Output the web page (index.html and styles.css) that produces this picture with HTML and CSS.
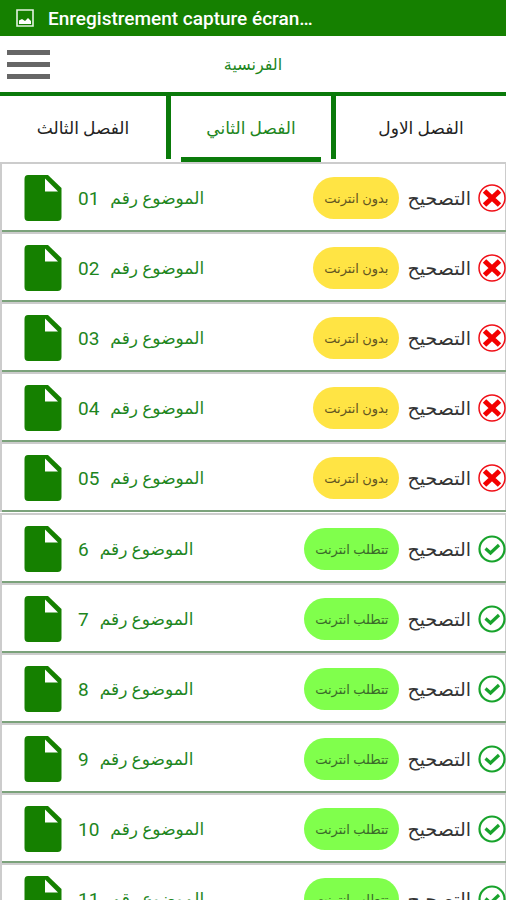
FILE: index.html
```
<!DOCTYPE html>
<html lang="ar">
<head>
<meta charset="utf-8">
<meta name="viewport" content="width=device-width, initial-scale=1">
<title>الفرنسية</title>
<link rel="stylesheet" href="styles.css">
</head>
<body>
<svg class="sprite" aria-hidden="true">
  <symbol id="file" viewBox="0 0 38 48"><path fill="#158000" d="M4 1H24L37.500 14V43Q37.500 47 33.500 47H4Q.5 47 .5 43V5Q.5 1 4 1Z"/><path fill="#fff" d="M21 4.500V17.500H34Z"/></symbol>
  <symbol id="cross" viewBox="0 0 28 28"><circle cx="14" cy="14" r="13" fill="#fff" stroke="#f01018" stroke-width="1.500"/><path d="M6.500 7 21.500 21M21.500 7 6.500 21" stroke="#f40000" stroke-width="5"/></symbol>
  <symbol id="check" viewBox="0 0 28 28"><circle cx="14" cy="14" r="12.500" fill="#fff" stroke="#18a32c" stroke-width="2.200"/><path d="M7.500 13.500 12.500 18 21 10" fill="none" stroke="#18a32c" stroke-width="3.200"/></symbol>
</svg>
<div class="status" dir="ltr" lang="fr">
  <svg class="status-icon" viewBox="0 0 18 18" aria-hidden="true"><path fill="none" stroke="#e4f2e0" stroke-width="1.600" d="M1 1H17V17H1Z"/><path fill="#fff" d="M3 15V11.500L6 10 9 12 12 9 15 12V15Z"/></svg>
  <span>Enregistrement capture écran…</span>
</div>
<header class="bar">
  <button class="menu" type="button" aria-label="القائمة"><span></span><span></span><span></span></button>
  <h1>الفرنسية</h1>
</header>
<nav class="tabs" dir="rtl">
  <a href="#t1">الفصل الاول</a>
  <a href="#t2" class="active" aria-current="page">الفصل الثاني</a>
  <a href="#t3">الفصل الثالث</a>
</nav>
<main>
  <ul class="list">
    <li class="row"><svg class="file" aria-hidden="true"><use href="#file"/></svg><a class="topic" href="#s1"><span class="num">01</span><span>الموضوع رقم</span></a><span class="pill offline">بدون انترنت</span><span class="fix">التصحيح</span><svg class="state" aria-hidden="true"><use href="#cross"/></svg></li>
    <li class="row"><svg class="file" aria-hidden="true"><use href="#file"/></svg><a class="topic" href="#s2"><span class="num">02</span><span>الموضوع رقم</span></a><span class="pill offline">بدون انترنت</span><span class="fix">التصحيح</span><svg class="state" aria-hidden="true"><use href="#cross"/></svg></li>
    <li class="row"><svg class="file" aria-hidden="true"><use href="#file"/></svg><a class="topic" href="#s3"><span class="num">03</span><span>الموضوع رقم</span></a><span class="pill offline">بدون انترنت</span><span class="fix">التصحيح</span><svg class="state" aria-hidden="true"><use href="#cross"/></svg></li>
    <li class="row"><svg class="file" aria-hidden="true"><use href="#file"/></svg><a class="topic" href="#s4"><span class="num">04</span><span>الموضوع رقم</span></a><span class="pill offline">بدون انترنت</span><span class="fix">التصحيح</span><svg class="state" aria-hidden="true"><use href="#cross"/></svg></li>
    <li class="row"><svg class="file" aria-hidden="true"><use href="#file"/></svg><a class="topic" href="#s5"><span class="num">05</span><span>الموضوع رقم</span></a><span class="pill offline">بدون انترنت</span><span class="fix">التصحيح</span><svg class="state" aria-hidden="true"><use href="#cross"/></svg></li>
  </ul>
  <ul class="list">
    <li class="row"><svg class="file" aria-hidden="true"><use href="#file"/></svg><a class="topic" href="#s6"><span class="num">6</span><span>الموضوع رقم</span></a><span class="pill online">تتطلب انترنت</span><span class="fix">التصحيح</span><svg class="state" aria-hidden="true"><use href="#check"/></svg></li>
    <li class="row"><svg class="file" aria-hidden="true"><use href="#file"/></svg><a class="topic" href="#s7"><span class="num">7</span><span>الموضوع رقم</span></a><span class="pill online">تتطلب انترنت</span><span class="fix">التصحيح</span><svg class="state" aria-hidden="true"><use href="#check"/></svg></li>
    <li class="row"><svg class="file" aria-hidden="true"><use href="#file"/></svg><a class="topic" href="#s8"><span class="num">8</span><span>الموضوع رقم</span></a><span class="pill online">تتطلب انترنت</span><span class="fix">التصحيح</span><svg class="state" aria-hidden="true"><use href="#check"/></svg></li>
    <li class="row"><svg class="file" aria-hidden="true"><use href="#file"/></svg><a class="topic" href="#s9"><span class="num">9</span><span>الموضوع رقم</span></a><span class="pill online">تتطلب انترنت</span><span class="fix">التصحيح</span><svg class="state" aria-hidden="true"><use href="#check"/></svg></li>
    <li class="row"><svg class="file" aria-hidden="true"><use href="#file"/></svg><a class="topic" href="#s10"><span class="num">10</span><span>الموضوع رقم</span></a><span class="pill online">تتطلب انترنت</span><span class="fix">التصحيح</span><svg class="state" aria-hidden="true"><use href="#check"/></svg></li>
    <li class="row"><svg class="file" aria-hidden="true"><use href="#file"/></svg><a class="topic" href="#s11"><span class="num">11</span><span>الموضوع رقم</span></a><span class="pill online">تتطلب انترنت</span><span class="fix">التصحيح</span><svg class="state" aria-hidden="true"><use href="#check"/></svg></li>
  </ul>
</main>
</body>
</html>
```
FILE: styles.css
```
* { box-sizing: border-box; }
html { scrollbar-width: none; }
body { margin: 0; background: #fff; font-family: Roboto, "DejaVu Sans", sans-serif; font-size: 17px; color: #333; }
a { color: inherit; text-decoration: none; }
.sprite { display: none; }
.status { display: flex; align-items: center; gap: 14px; height: 36px; padding: 0 16px; background: #158000; color: #fff; font-size: 19px; font-weight: 500; }
.status-icon { width: 18px; height: 18px; }
.bar { display: grid; grid-template-columns: 44px 1fr 44px; align-items: center; height: 60px; padding: 0 7px; border-bottom: 4px solid #0a7a0a; }
.menu { display: flex; flex-direction: column; gap: 7px; width: 43px; padding: 0; border: 0; background: none; }
.menu span { height: 5px; background: #666; }
h1 { margin: 0; text-align: center; font-size: 16px; font-weight: 400; color: #1d861d; }
.tabs { display: grid; grid-template-columns: 170fr 170fr 166fr; height: 66px; }
.tabs a { display: flex; align-items: center; justify-content: center; margin-bottom: 3px; color: #222; }
.tabs .active { position: relative; border: solid #0a7a0a; border-width: 0 5px; color: #1d861d; }
.tabs .active::after { content: ""; position: absolute; left: 10px; right: 10px; bottom: -3px; height: 5px; background: #0a7a0a; }
.list { margin: 0 0 1px; padding: 0; list-style: none; }
.row { display: flex; align-items: center; height: 70px; padding-left: 22px; border: solid #ccc; border-width: 2px 0 0 2px; box-shadow: inset 0 -2px #7ba27b, inset -1px 0 #ccc; }
.file { flex: none; width: 38px; height: 48px; }
.topic { display: flex; align-items: center; gap: 11px; margin-left: 16px; color: #1d861d; }
.num { font-size: 19px; }
.pill { display: flex; align-items: center; height: 42px; margin-left: auto; padding: 0 11px; border-radius: 21px; font-size: 13px; }
.offline { background: #ffe444; color: #625522; }
.online { background: #80ff4c; color: #3b682a; }
.fix { margin: 0 7px 0 8px; font-size: 19px; }
.state { flex: none; width: 28px; height: 28px; }
```
